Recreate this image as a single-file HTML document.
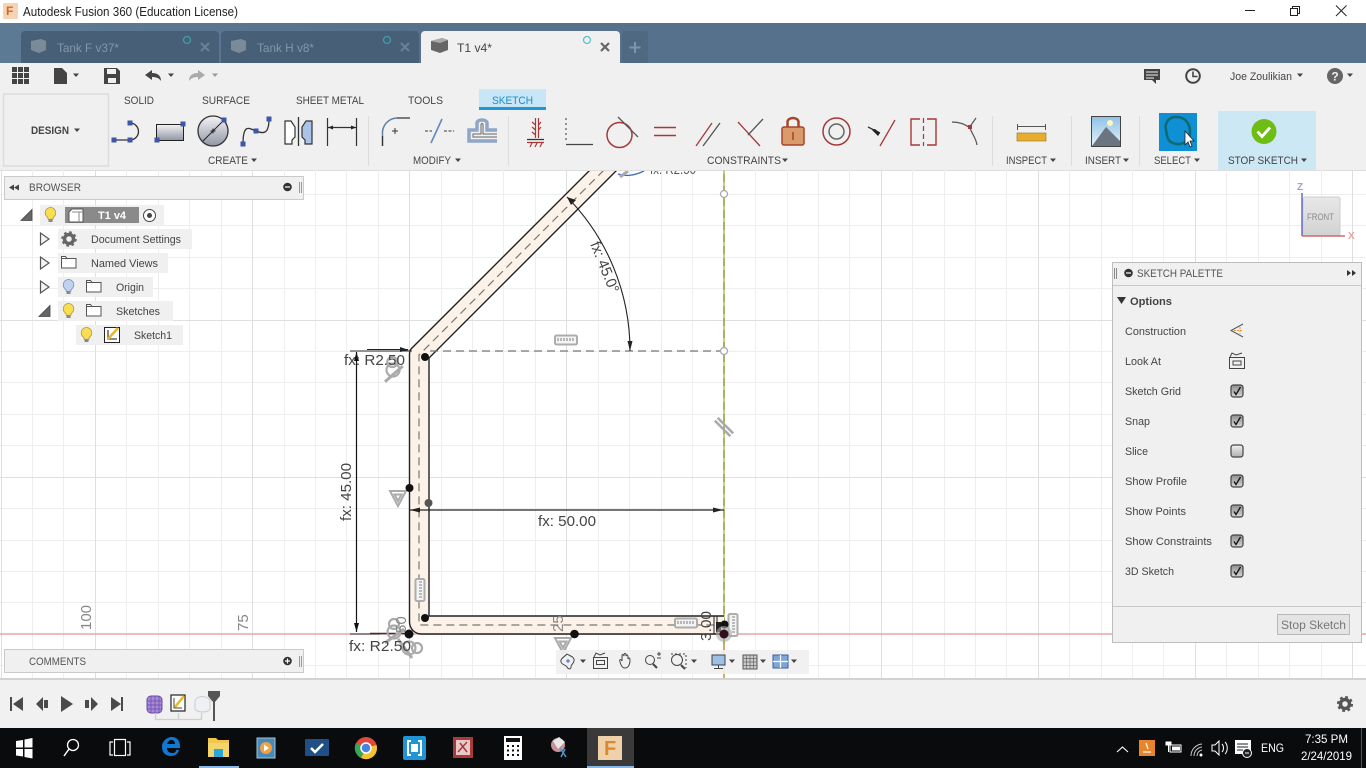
<!DOCTYPE html>
<html lang="en"><head><meta charset="utf-8"><title>Autodesk Fusion 360</title>
<style>html,body{margin:0;padding:0;background:#fff;overflow:hidden}svg{display:block;font-family:"Liberation Sans",sans-serif}</style></head>
<body>
<svg width="1366" height="768" viewBox="0 0 1366 768" xmlns="http://www.w3.org/2000/svg">
<defs>
<clipPath id="cv"><rect x="0" y="171" width="1366" height="507"/></clipPath>
<linearGradient id="g1" x1="0" y1="0" x2="0" y2="1"><stop offset="0" stop-color="#f4f4f6"/><stop offset="1" stop-color="#8f95a3"/></linearGradient>
<linearGradient id="tb" x1="0" y1="0" x2="1" y2="0"><stop offset="0" stop-color="#5d7a95"/><stop offset=".3" stop-color="#56718b"/><stop offset="1" stop-color="#56718b"/></linearGradient>
<linearGradient id="cb" x1="0" y1="0" x2="0" y2="1"><stop offset="0" stop-color="#909090"/><stop offset="1" stop-color="#d4d4d4"/></linearGradient>
<linearGradient id="cb2" x1="0" y1="0" x2="0" y2="1"><stop offset="0" stop-color="#f0f0f0"/><stop offset="1" stop-color="#b0b0b0"/></linearGradient>
<linearGradient id="cube" x1="0" y1="0" x2="0" y2="1"><stop offset="0" stop-color="#e8e8e8"/><stop offset="1" stop-color="#d2d2d2"/></linearGradient>
<linearGradient id="sky" x1="0" y1="0" x2="0" y2="1"><stop offset="0" stop-color="#8fc1e8"/><stop offset="1" stop-color="#e8f2f8"/></linearGradient>
<g id="bulb"><path d="M0-7.500a5.300 5.300 0 0 1 3.400 9.300c-.9.900-1.100 1.400-1.100 2.500h-4.600c0-1.100-.2-1.600-1.100-2.500A5.300 5.300 0 0 1 0-7.500z" fill="#f8de50" stroke="#a89a50" stroke-width=".8"/><path d="M-2 4.500h4v2.500h-4z" fill="#888"/></g>
<g id="bulbb"><path d="M0-7.500a5.300 5.300 0 0 1 3.400 9.300c-.9.900-1.100 1.400-1.100 2.500h-4.600c0-1.100-.2-1.600-1.100-2.500A5.300 5.300 0 0 1 0-7.500z" fill="#c0d2f2" stroke="#7f8fb0" stroke-width=".8"/><path d="M-2 4.500h4v2.500h-4z" fill="#888"/></g>
<path id="folder" d="M.5 1.500h4l1.500 2h9v9.500H.5zM.5 3.500h5.500" fill="#fff" stroke="#555" stroke-width="1"/>
<path id="triopen" d="M0-6V6L8.500 0z" fill="#f4f4f4" stroke="#555" stroke-width="1.200"/>
<path id="triexp" d="M0 5.500H11V-5.500z" fill="#666" stroke="#444" stroke-width=".8"/>
<g id="chk"><rect x="-6" y="-6" width="12" height="12" rx="2.500" fill="url(#cb)" stroke="#444" stroke-width="1.200"/><path d="M-3 .5L-1 3.500L3.500-4" fill="none" stroke="#111" stroke-width="1.300"/></g>
<g id="ruler"><rect x="-11" y="-4.500" width="22" height="9" rx="1.500" fill="#f4f4f4" stroke="#adadad" stroke-width="2"/><path d="M-8-2v3M-5-2v3M-2-2v3M1-2v3M4-2v3M7-2v3" stroke="#999" stroke-width="1.300"/></g>
<path id="cstr" d="M-8-7H8L0 8z M-3.500-3.500H3.500L0 3z" fill="#fff" fill-opacity=".75" stroke="#aaa" stroke-width="2"/>
<g id="tang"><circle cx="0" cy="0" r="6.500" fill="none" stroke="#aaa" stroke-width="2.200"/><circle cx="0" cy="-8" r="5" fill="none" stroke="#aaa" stroke-width="2.200"/><path d="M-9 11L10 -3" stroke="#aaa" stroke-width="3"/></g>
<path id="car" d="M-3-1.500H3L0 2z" fill="#444"/>
<path id="sq" d="M-2.500-2.500h5v5h-5z" fill="#3c57a8"/>
</defs>

<!-- title bar -->
<rect width="1366" height="23" fill="#fff"/>
<rect x="3" y="3" width="15" height="16" rx="1" fill="#f5d3b4"/><text x="6" y="15" font-size="12" font-weight="bold" fill="#d4691f">F</text>
<text x="23" y="16" font-size="13" fill="#222" textLength="215" lengthAdjust="spacingAndGlyphs">Autodesk Fusion 360 (Education License)</text>
<path d="M1245 10.500h10" stroke="#222" stroke-width="1"/>
<path d="M1290.500 8.500h7v7h-7zM1292.500 8.500v-2h7v7h-2" fill="none" stroke="#222"/>
<path d="M1336 5.500l10.500 10.500M1346.500 5.500L1336 16" stroke="#222" stroke-width="1"/>

<!-- tab band -->
<rect y="23" width="1366" height="40" fill="url(#tb)"/>
<path d="M21 35a4 4 0 0 1 4-4H215a4 4 0 0 1 4 4V63H21z" fill="#475f77"/>
<path d="M221 35a4 4 0 0 1 4-4H415a4 4 0 0 1 4 4V63H221z" fill="#475f77"/>
<path d="M421 35a4 4 0 0 1 4-4H616a4 4 0 0 1 4 4V63H421z" fill="#f0f0f0"/>
<rect x="622" y="31" width="26" height="32" rx="2" fill="#4f6982"/>
<path d="M31 41l10-2 5 2v9l-7 3-8-3z" fill="#7b8a98"/>
<path d="M231 41l10-2 5 2v9l-7 3-8-3z" fill="#7b8a98"/>
<path d="M431 41l11-3 6 2v10l-8 3-9-3z" fill="#666"/><path d="M431 41l9 2 8-3-6-2z" fill="#aaa"/>
<text x="57" y="52" font-size="12" fill="#8497a9" textLength="62" lengthAdjust="spacingAndGlyphs">Tank F v37*</text>
<text x="257" y="52" font-size="12" fill="#8497a9" textLength="57" lengthAdjust="spacingAndGlyphs">Tank H v8*</text>
<text x="457" y="52" font-size="12" fill="#444" textLength="35" lengthAdjust="spacingAndGlyphs">T1 v4*</text>
<circle cx="187" cy="40" r="3.500" fill="none" stroke="#3fa0a8" stroke-width="1.300"/>
<circle cx="387" cy="40" r="3.500" fill="none" stroke="#3fa0a8" stroke-width="1.300"/>
<circle cx="587" cy="40" r="3.500" fill="none" stroke="#5cc0c8" stroke-width="1.300"/>
<path d="M201 43l8 8M209 43l-8 8M401 43l8 8M409 43l-8 8" stroke="#6d8092" stroke-width="2.200"/>
<path d="M601 43l8 8M609 43l-8 8" stroke="#666" stroke-width="2.200"/>
<path d="M635 42v11M629.500 47.500h11" stroke="#7f95a9" stroke-width="2"/>

<!-- toolbar -->
<rect y="63" width="1366" height="107" fill="#f0f0f0"/>
<g fill="#444">
<path d="M12 67h5v5h-5zM18 67h5v5h-5zM24 67h5v5h-5zM12 73h5v5h-5zM18 73h5v5h-5zM24 73h5v5h-5zM12 79h5v5h-5zM18 79h5v5h-5zM24 79h5v5h-5z"/>
<path d="M54 68h8l5 5v11H54z"/>
<path d="M104 68h13l3 3v13h-16z"/>
</g>
<rect x="107" y="69" width="9" height="5" fill="#f0f0f0"/><rect x="108" y="78" width="8" height="5" fill="#f0f0f0"/>
<use href="#car" x="76" y="75"/>
<path d="M145 75l7-5v3c5 0 9 2 9 8-2-3-5-4-9-4v3z" fill="#444"/><use href="#car" x="171" y="75"/>
<path d="M205 75l-7-5v3c-5 0-9 2-9 8 2-3 5-4 9-4v3z" fill="#aaa"/><use href="#car" x="215" y="75" opacity=".5"/>
<path d="M1144 69h16v11h-4v4l-4-4h-8z" fill="#444"/><path d="M1146 72h12M1146 75h12M1146 78h8" stroke="#f0f0f0"/>
<circle cx="1193" cy="76" r="6.800" fill="none" stroke="#444" stroke-width="2"/><path d="M1193 71.500V76.500H1197.500" fill="none" stroke="#444" stroke-width="1.600"/>
<text x="1230" y="80" font-size="11" fill="#444" textLength="62" lengthAdjust="spacingAndGlyphs">Joe Zoulikian</text><use href="#car" x="1300" y="75"/>
<circle cx="1335" cy="76" r="8" fill="#666"/><text x="1335" y="80.500" font-size="12" font-weight="bold" fill="#f0f0f0" text-anchor="middle">?</text><use href="#car" x="1350" y="75"/>

<rect x="3.500" y="94" width="105" height="72" fill="#f0f0f0" stroke="#dcdcdc" stroke-width="1.500"/>
<text x="31" y="134" font-size="11" font-weight="bold" fill="#444" textLength="38" lengthAdjust="spacingAndGlyphs">DESIGN</text><use href="#car" x="77" y="130"/>
<g font-size="11" fill="#444">
<text x="124" y="104" textLength="30" lengthAdjust="spacingAndGlyphs">SOLID</text>
<text x="202" y="104" textLength="48" lengthAdjust="spacingAndGlyphs">SURFACE</text>
<text x="296" y="104" textLength="68" lengthAdjust="spacingAndGlyphs">SHEET METAL</text>
<text x="408" y="104" textLength="35" lengthAdjust="spacingAndGlyphs">TOOLS</text>
</g>
<rect x="479" y="89" width="67" height="20" fill="#c9e6f6"/><rect x="479" y="107" width="67" height="3" fill="#1f97d4"/>
<text x="492" y="104" font-size="11" fill="#1c8dcb" textLength="41" lengthAdjust="spacingAndGlyphs">SKETCH</text>
<g font-size="11" fill="#444">
<text x="208" y="164" textLength="40" lengthAdjust="spacingAndGlyphs">CREATE</text><use href="#car" x="254" y="160"/>
<text x="413" y="164" textLength="38" lengthAdjust="spacingAndGlyphs">MODIFY</text><use href="#car" x="458" y="160"/>
<text x="707" y="164" textLength="74" lengthAdjust="spacingAndGlyphs">CONSTRAINTS</text><use href="#car" x="785" y="160"/>
<text x="1006" y="164" textLength="41" lengthAdjust="spacingAndGlyphs">INSPECT</text><use href="#car" x="1053" y="160"/>
<text x="1085" y="164" textLength="36" lengthAdjust="spacingAndGlyphs">INSERT</text><use href="#car" x="1126" y="160"/>
<text x="1154" y="164" textLength="37" lengthAdjust="spacingAndGlyphs">SELECT</text><use href="#car" x="1197" y="160"/>
</g>
<path d="M368.500 116V166M508.500 116V166M992.500 116V166M1071.500 116V166M1139.500 116V166" stroke="#ddd"/>

<!-- create icons -->
<path d="M114 140H130A8.500 8.500 0 0 0 130 123" fill="none" stroke="#333" stroke-width="1.300"/>
<use href="#sq" x="114" y="140"/><use href="#sq" x="130" y="140"/><use href="#sq" x="130" y="123"/>
<rect x="156.500" y="124.500" width="27" height="16" fill="url(#g1)" stroke="#222"/>
<use href="#sq" x="183" y="124"/><use href="#sq" x="157" y="140"/>
<circle cx="213" cy="131" r="15" fill="url(#g1)" stroke="#333" stroke-width="1.300"/>
<path d="M203 141L224 120M210.500 131h5M213 128.500v5" stroke="#222"/><use href="#sq" x="224" y="120"/>
<path d="M243 144C243 122 250 129 256 131S269 136 269 119" fill="none" stroke="#333" stroke-width="1.300"/>
<use href="#sq" x="243" y="144"/><use href="#sq" x="256" y="131"/><use href="#sq" x="269" y="119"/>
<path d="M285 121h6l4 6v10l-3 3v4h-7z" fill="#fff" stroke="#333" stroke-width="1.200"/>
<path d="M298.500 117V146" stroke="#333" stroke-width="1.300"/>
<path d="M312 121h-6l-4 6v10l3 3v4h7z" fill="#a9c4e6" stroke="#333" stroke-width="1.200"/>
<path d="M327.500 118V146M356.500 118V146M328 127.500H356" stroke="#333" stroke-width="1.200"/>
<path d="M328 127.500l5-2v4zM356 127.500l-5-2v4z" fill="#222"/>
<!-- modify -->
<path d="M382.500 146V134A15 15 0 0 1 397 118" fill="none" stroke="#5f7fa8" stroke-width="1.500"/><path d="M382.500 146V136M397 118H410" stroke="#333" stroke-width="1.200"/>
<path d="M392 131h6M395 128v6" stroke="#333"/>
<path d="M425 131h7M444 131h10" stroke="#777" stroke-width="1.400" stroke-dasharray="3 1.500"/><path d="M431 143L442 119" stroke="#5f87c4" stroke-width="1.600"/>
<path d="M497 141H469V130H477V123C477 119 487 119 487 123V130H497" fill="none" stroke="#8fa6c8" stroke-width="3.500"/>
<path d="M497 137H473V134H481V125C481 123 483 123 483 125V134H497" fill="none" stroke="#666" stroke-width="1"/>
<!-- constraints -->
<g fill="none" stroke="#a83838" stroke-width="1.200">
<path d="M535.500 118V138M538.500 118V138M532 122l3.500 3M532 127l3.500 3M532 132l3.500 3M541 122l-2.500 3M541 127l-2.500 3"/>
<path d="M527 139.500H544" stroke="#333"/><path d="M527 142.500H544M530 147l2-4M535 147l2-4M540 147l2-4"/>
<path d="M566 118v25" stroke="#555" stroke-dasharray="2 3"/><path d="M566 144.500H593" stroke="#444"/>
<circle cx="619.500" cy="135" r="12.500" stroke-width="1.500"/>
<path d="M654 127.500H676M654 135.500H676" stroke-width="1.500"/>
<path d="M696 146L712 123" stroke-width="1.300"/><path d="M703 146L720 123" stroke="#555" stroke-width="1.300"/>
<path d="M738 122L760 146" stroke-width="1.300"/>
<path d="M748 135L763 119" stroke="#555" stroke-width="1.300"/>
<circle cx="836.500" cy="131.500" r="13.500" stroke-width="1.500"/><circle cx="836.500" cy="131.500" r="7.500" stroke="#666" stroke-width="1.500"/>
<path d="M880 146L895 120" stroke-width="1.300"/><path d="M868 127l12 6" stroke="#333" stroke-width="1.300"/>
<path d="M920 119h-9v26h9M927 119h9v26h-9" stroke-width="1.400"/><path d="M923.500 118v28" stroke-dasharray="5 3"/>
<path d="M952 122c6 0 13 2 18 6" stroke="#555"/><path d="M970 128c2 6 6 10 7 17" stroke="#555"/><path d="M976 118l-7 10" stroke="#555"/>
</g>
<path d="M618 117L638 137" stroke="#555" stroke-width="1.300"/>
<rect x="968" y="125" width="4" height="4" fill="#a83838"/>
<path d="M878 136l-6-6 3-1 5 4z" fill="#222"/>
<path d="M787.500 127V122a5.500 4 0 0 1 11 0V127" fill="none" stroke="#a8452a" stroke-width="2.500"/>
<rect x="782" y="127" width="22" height="18" rx="2" fill="#d99a6c" stroke="#a8452a" stroke-width="1.500"/><path d="M793 132v8" stroke="#a8452a" stroke-width="1.500"/>
<!-- inspect/insert/select/stop -->
<path d="M1017 126.500H1046M1017.500 124v6M1045.500 124v6" stroke="#555"/>
<rect x="1017" y="133" width="29" height="8" fill="#e6ad30" stroke="#a87c20" stroke-width=".7"/>
<rect x="1091.500" y="116.500" width="29" height="30" fill="url(#sky)" stroke="#444"/><circle cx="1110" cy="123" r="3" fill="#fff6c0"/>
<path d="M1092 146L1106 127L1120 141V146z" fill="#6b7580"/>
<rect x="1159" y="113" width="38" height="38" fill="#0f8fd4"/>
<path d="M1166 130C1164 120 1172 116 1178 117 1186 118 1190 124 1190 132 1190 143 1180 146 1173 143 1167 141 1167 135 1166 130z" fill="none" stroke="#0d6a70" stroke-width="2.500"/>
<path d="M1185 131v14l3-3 2 5 2-1-2-5h4z" fill="#fff" stroke="#222" stroke-width=".8"/>
<rect x="1218" y="111" width="98" height="59" fill="#cde8f5"/>
<circle cx="1264" cy="131.500" r="12.500" fill="#6ebd14"/><path d="M1257.500 131.500l4.500 5 8-9" fill="none" stroke="#fff" stroke-width="2.800"/>
<text x="1228" y="164" font-size="11" fill="#444" textLength="70" lengthAdjust="spacingAndGlyphs">STOP SKETCH</text><use href="#car" x="1304" y="160"/>

<!-- canvas -->
<rect y="170" width="1366" height="508" fill="#fff"/>
<path d="M0 170.500H1366" stroke="#ddd"/>
<g stroke="#eeeeee" stroke-width="1">
<path d="M32.500 170V678M63.500 170V678M126.500 170V678M158.500 170V678M189.500 170V678M221.500 170V678M284.500 170V678M315.500 170V678M346.500 170V678M378.500 170V678M441.500 170V678M472.500 170V678M503.500 170V678M535.500 170V678M598.500 170V678M629.500 170V678M661.500 170V678M692.500 170V678M755.500 170V678M787.500 170V678M818.500 170V678M849.500 170V678M912.500 170V678M944.500 170V678M975.500 170V678M1006.500 170V678M1069.500 170V678M1101.500 170V678M1132.500 170V678M1163.500 170V678M1226.500 170V678M1258.500 170V678M1289.500 170V678M1321.500 170V678"/>
<path d="M0 194.500H1366M0 225.500H1366M0 257.500H1366M0 288.500H1366M0 351.500H1366M0 382.500H1366M0 414.500H1366M0 445.500H1366M0 508.500H1366M0 540.500H1366M0 571.500H1366M0 602.500H1366M0 665.500H1366"/>
</g>
<g stroke="#dfdfdf" stroke-width="1">
<path d="M1.500 170V678M95.500 170V678M252.500 170V678M409.500 170V678M566.500 170V678M881.500 170V678M1038.500 170V678M1195.500 170V678M1352.500 170V678"/>
<path d="M0 320.500H1366M0 477.500H1366"/>
</g>
<path d="M0 634H1366" stroke="#e8a6a6" stroke-width="1.500"/>
<!-- axis -->
<path d="M724 170V678" stroke="#a8a850" stroke-width="1.800"/><path d="M724 170V634" stroke="#c8e09a" stroke-width="1.200" stroke-dasharray="4 8"/>
<path d="M724 634V678" stroke="#d8a860" stroke-width="1.500" stroke-dasharray="5 5"/>

<!-- profile -->
<g clip-path="url(#cv)">
<path d="M590 170L411 349Q409 351 409 354V622A12 12 0 0 0 421 634H724V616H429V358L617 170z" fill="#fcf2e8"/>
<g fill="none" stroke="#222" stroke-width="1.400">
<path d="M590 170L411 349Q409.500 351 409.500 354V622A12 12 0 0 0 421 634H724"/>
<path d="M617 170L429 358V616H724"/>
</g>
<g fill="none" stroke="#777" stroke-width="1.200" stroke-dasharray="8 5">
<path d="M604 170L419 355V625H724"/>
<path d="M430 351H724"/>
</g>
<path d="M350 351H412" stroke="#333" stroke-width="1"/>
<path d="M367 349.500H408" stroke="#222" stroke-width="1"/><path d="M409 350l-9-3v5z" fill="#222"/>
<circle cx="724" cy="194" r="3.500" fill="#fff" stroke="#aaa" stroke-width="1.300"/>
<circle cx="724" cy="351" r="3.500" fill="#fff" stroke="#aaa" stroke-width="1.300"/>
<!-- dims -->
<path d="M356.500 352V632" stroke="#111" stroke-width="1.200"/><path d="M356.500 352l-2.500 9h5zM356.500 632l-2.500-9h5z" fill="#111"/>
<path d="M370 633.500H409" stroke="#333" stroke-width="1.500"/><path d="M350 634H380" stroke="#333" stroke-width="1"/>
<path d="M409 510H724" stroke="#222" stroke-width="1.200"/><path d="M410 510l10-2.500v5zM723 510l-10-2.500v5z" fill="#222"/>
<path d="M567 197A219 219 0 0 1 630 351" fill="none" stroke="#222" stroke-width="1.100"/><path d="M567 197l9 3-5 5zM630 351l-2.500-10h5z" fill="#222"/>
<path d="M714 616.500V634" stroke="#222"/><path d="M716 622h5v10h-5z" fill="#222"/>
<path d="M717 633V616" stroke="#222" stroke-width="1"/>
<!-- cropped label top -->
<path d="M618 174c8 3 18 1 26-3" fill="none" stroke="#3c66c8" stroke-width="1.300"/>
<path d="M620 177l8-6" stroke="#aaa" stroke-width="3"/>
<text x="650" y="174" font-size="14" fill="#555" textLength="46" lengthAdjust="spacingAndGlyphs">fx: R2.50</text>
<!-- constraint glyphs -->
<use href="#tang" transform="translate(393 370) rotate(-5)"/>
<use href="#ruler" x="566" y="340"/>
<use href="#ruler" transform="translate(420 590) rotate(90)"/>
<use href="#ruler" x="686" y="623"/>
<use href="#ruler" transform="translate(733 625) rotate(90)"/>
<g transform="translate(724 427) rotate(45)" stroke="#aaa" stroke-width="2.500"><path d="M-11-2H11M-11 2H11"/></g>
<use href="#cstr" x="398" y="498"/>
<use href="#cstr" x="563" y="645"/>
<use href="#tang" x="394" y="632"/>
<use href="#tang" transform="translate(409 648) rotate(90)"/>
<!-- points -->
<g fill="#111">
<circle cx="425" cy="357" r="4"/><circle cx="409.500" cy="488" r="4"/><circle cx="425" cy="618" r="4"/><circle cx="409" cy="634" r="4.500"/><circle cx="574.500" cy="634" r="4.300"/>
<circle cx="724.500" cy="624.500" r="4"/>
</g>
<circle cx="428.500" cy="503" r="4" fill="#555"/>
<circle cx="724" cy="634" r="8" fill="#aaa" opacity=".6"/><circle cx="724" cy="634" r="4.500" fill="#30101e"/>
<!-- dim text -->
<g fill="#444" font-size="15">
<text x="344" y="365" textLength="61" lengthAdjust="spacingAndGlyphs">fx: R2.50</text>
<text x="349" y="651" textLength="62" lengthAdjust="spacingAndGlyphs">fx: R2.50</text>
<text x="538" y="526" textLength="58" lengthAdjust="spacingAndGlyphs">fx: 50.00</text>
<text transform="translate(351 521) rotate(-90)" textLength="58" lengthAdjust="spacingAndGlyphs">fx: 45.00</text>
<text transform="translate(590 244) rotate(68)" textLength="54" lengthAdjust="spacingAndGlyphs">fx: 45.0°</text>
<text transform="translate(711 641) rotate(-90)" textLength="30" lengthAdjust="spacingAndGlyphs">3.00</text>
</g>
<g fill="#888" font-size="15">
<text transform="translate(91 630) rotate(-90)">100</text>
<text transform="translate(248 631) rotate(-90)">75</text>
<text transform="translate(406 633) rotate(-90)">50</text>
<text transform="translate(563 632) rotate(-90)">25</text>
</g>
</g>

<!-- browser -->
<rect x="4.500" y="176.500" width="299" height="23" fill="#f0f0f0" stroke="#cacaca"/>
<path d="M9 187.500l5-3v6zM14 187.500l5-3v6z" fill="#444"/>
<text x="29" y="191" font-size="11" fill="#555" textLength="52" lengthAdjust="spacingAndGlyphs">BROWSER</text>
<circle cx="287.500" cy="187" r="4.300" fill="#333"/><path d="M285 187h5" stroke="#fff" stroke-width="1.200"/>
<path d="M299.500 182v11M301.500 182v11" stroke="#999"/>
<rect x="40" y="205" width="124" height="20" fill="#f0f0f0"/>
<rect x="58" y="229" width="134" height="20" fill="#f0f0f0"/>
<rect x="58" y="253" width="110" height="20" fill="#f0f0f0"/>
<rect x="58" y="277" width="95" height="20" fill="#f0f0f0"/>
<rect x="58" y="301" width="115" height="20" fill="#f0f0f0"/>
<rect x="76" y="325" width="107" height="20" fill="#f0f0f0"/>
<use href="#triexp" x="21" y="215"/><use href="#triexp" x="39" y="311"/>
<use href="#triopen" x="40.500" y="239"/><use href="#triopen" x="40.500" y="263"/><use href="#triopen" x="40.500" y="287"/>
<use href="#bulb" x="50.500" y="215"/><use href="#bulb" x="68.500" y="311"/><use href="#bulb" x="86.500" y="335"/><use href="#bulbb" x="68.500" y="287"/>
<rect x="65" y="207" width="74" height="16" fill="#8a8a8a"/>
<path d="M69 212l3-3h11v13H69z" fill="#fff" stroke="#555"/><path d="M72 212h11" stroke="#888" fill="none"/><path d="M79 212v10" stroke="#888"/>
<text x="98" y="219" font-size="11" font-weight="bold" fill="#fff" textLength="28" lengthAdjust="spacingAndGlyphs">T1 v4</text>
<circle cx="149.500" cy="215.500" r="6" fill="#fff" stroke="#444"/><circle cx="149.500" cy="215.500" r="2.500" fill="#444"/>
<circle cx="69" cy="239" r="4.500" fill="none" stroke="#666" stroke-width="3.500"/><circle cx="69" cy="239" r="6.500" fill="none" stroke="#666" stroke-width="2.500" stroke-dasharray="2.500 2.600"/>
<use href="#folder" x="61" y="255"/><use href="#folder" x="86" y="279"/><use href="#folder" x="86" y="303"/>
<rect x="104.500" y="327.500" width="15" height="15" fill="#fff" stroke="#222"/><path d="M108 330v9h9" fill="none" stroke="#445" stroke-width="1.300"/><path d="M108 339l10-11" stroke="#e8b820" stroke-width="2.500"/>
<g font-size="11" fill="#444">
<text x="91" y="243" textLength="90" lengthAdjust="spacingAndGlyphs">Document Settings</text>
<text x="91" y="267" textLength="67" lengthAdjust="spacingAndGlyphs">Named Views</text>
<text x="116" y="291" textLength="28" lengthAdjust="spacingAndGlyphs">Origin</text>
<text x="116" y="315" textLength="44" lengthAdjust="spacingAndGlyphs">Sketches</text>
<text x="134" y="339" textLength="38" lengthAdjust="spacingAndGlyphs">Sketch1</text>
</g>
<!-- comments -->
<rect x="4.500" y="649.500" width="299" height="23" fill="#f0f0f0" stroke="#cacaca"/>
<text x="29" y="665" font-size="11" fill="#555" textLength="57" lengthAdjust="spacingAndGlyphs">COMMENTS</text>
<circle cx="287.500" cy="661" r="4.300" fill="#333"/><path d="M285 661h5M287.500 658.500v5" stroke="#fff" stroke-width="1.200"/>
<path d="M299.500 656v11M301.500 656v11" stroke="#999"/>

<!-- nav bar -->
<rect x="556" y="650" width="253" height="24" fill="#f0f0f0" opacity=".9"/>
<g fill="none" stroke="#444" stroke-width="1">
<path d="M567 654c3 2 8 3 7 7s-3 3-3 6-3 2-4 0-5-2-6-5 3-5 6-8z"/><path d="M566 661h4M568 659v4" stroke="#3c66c8"/>
<path d="M593.500 657.500h14v11h-14zM596.500 660.500h8v4h-8zM594 657l2-4 4 2 5-2" />
<path d="M620 662c-1-3 1-3 2-1v-5c0-2 1-2 2 0v-1c0-2 2-2 2 0v1c1-2 2-1 2 1v2c1-2 2-1 2 1 0 5-2 8-5 8s-4-3-5-6z"/>
<circle cx="650" cy="660" r="4.500"/><path d="M653 664l4 4" stroke-width="2"/><path d="M657 654h4M659 652v4M657 658h4"/>
<circle cx="677" cy="660" r="5.500"/><path d="M681 665l4 4" stroke-width="2"/><path d="M671 654h15v14" stroke-dasharray="2 2"/>
</g>
<rect x="712" y="655" width="13" height="10" fill="#9ec0e4" stroke="#444"/><path d="M718.500 665v3M714 668.500h9" stroke="#444"/>
<rect x="743" y="655" width="14" height="14" fill="#ccc" stroke="#555"/><path d="M743 658.500h14M743 662h14M743 665.500h14M746.500 655v14M750 655v14M753.500 655v14" stroke="#666" stroke-width=".7"/>
<rect x="773" y="655" width="15" height="13" fill="#7fa6d4" stroke="#3c5f95"/><path d="M780.500 655v13M773 661.500h15" stroke="#fff" stroke-width="1.200"/>
<use href="#car" x="583" y="661"/><use href="#car" x="694" y="661"/><use href="#car" x="732" y="661"/><use href="#car" x="763" y="661"/><use href="#car" x="794" y="661"/>

<!-- view cube -->
<rect x="1303" y="197" width="37" height="39" rx="2" fill="url(#cube)" stroke="#ccc"/>
<text x="1320.500" y="220" font-size="9" fill="#8a8a8a" text-anchor="middle" textLength="27" lengthAdjust="spacingAndGlyphs">FRONT</text>
<path d="M1302 193V236" stroke="#6a6ac0" stroke-width="1.500"/><path d="M1302 236H1345" stroke="#d06a6a" stroke-width="1.500"/>
<text x="1297" y="190" font-size="10" font-weight="bold" fill="#a0a0e0">Z</text>
<text x="1348" y="239" font-size="10" font-weight="bold" fill="#eaa0a0">X</text>

<!-- palette -->
<rect x="1112.500" y="262.500" width="249" height="380" fill="#f0f0f0" stroke="#bdbdbd"/>
<path d="M1113 285.500H1361M1113 606.500H1361" stroke="#c8c8c8"/>
<path d="M1114.500 268v11M1116.500 268v11" stroke="#888"/>
<circle cx="1128.500" cy="273" r="4.300" fill="#333"/><path d="M1126 273h5" stroke="#fff" stroke-width="1.200"/>
<text x="1137" y="277" font-size="11" fill="#555" textLength="86" lengthAdjust="spacingAndGlyphs">SKETCH PALETTE</text>
<path d="M1347 270v6l4-3zM1352 270v6l4-3z" fill="#333"/>
<path d="M1117 297h9l-4.500 7z" fill="#333"/>
<text x="1130" y="305" font-size="11" font-weight="bold" fill="#444" textLength="42" lengthAdjust="spacingAndGlyphs">Options</text>
<g font-size="11" fill="#444">
<text x="1125" y="335" textLength="61" lengthAdjust="spacingAndGlyphs">Construction</text>
<text x="1125" y="365" textLength="36" lengthAdjust="spacingAndGlyphs">Look At</text>
<text x="1125" y="395" textLength="56" lengthAdjust="spacingAndGlyphs">Sketch Grid</text>
<text x="1125" y="425" textLength="25" lengthAdjust="spacingAndGlyphs">Snap</text>
<text x="1125" y="455" textLength="23" lengthAdjust="spacingAndGlyphs">Slice</text>
<text x="1125" y="485" textLength="62" lengthAdjust="spacingAndGlyphs">Show Profile</text>
<text x="1125" y="515" textLength="61" lengthAdjust="spacingAndGlyphs">Show Points</text>
<text x="1125" y="545" textLength="87" lengthAdjust="spacingAndGlyphs">Show Constraints</text>
<text x="1125" y="575" textLength="49" lengthAdjust="spacingAndGlyphs">3D Sketch</text>
</g>
<path d="M1243 324l-12 6.500 12 6.500" fill="none" stroke="#555"/><path d="M1234 330.500h9M1240 327v7" stroke="#e8952a" stroke-dasharray="2 1"/>
<path d="M1229.500 357.500h15v11h-15zM1233 361h8v4h-8zM1230 357l2-4 4 2 6-2" fill="none" stroke="#444"/>
<use href="#chk" x="1237" y="391"/><use href="#chk" x="1237" y="421"/>
<rect x="1231" y="445" width="12" height="12" rx="2.500" fill="url(#cb2)" stroke="#444" stroke-width="1.200"/>
<use href="#chk" x="1237" y="481"/><use href="#chk" x="1237" y="511"/><use href="#chk" x="1237" y="541"/><use href="#chk" x="1237" y="571"/>
<rect x="1277.500" y="614.500" width="72" height="20" fill="#e4e4e4" stroke="#b8b8b8"/>
<text x="1281" y="629" font-size="12" fill="#777" textLength="65" lengthAdjust="spacingAndGlyphs">Stop Sketch</text>

<!-- timeline -->
<rect y="678" width="1366" height="50" fill="#f1f1f1"/>
<rect y="678" width="1366" height="2" fill="#d2d2d2"/>
<g fill="#4a4a4a">
<path d="M10 697h2v14h-2zM23 697v14l-10-7z"/>
<path d="M36 704l7-7v14zM44 700h4v8h-4z"/>
<path d="M61 696l12 8-12 8z"/>
<path d="M98 704l-7-7v14zM85 700h4v8h-4z"/>
<path d="M111 697l10 7-10 7zM121 697h2v14h-2z"/>
</g>
<rect x="147" y="696" width="15" height="17" rx="4" fill="#a58ad8" stroke="#6a4aa8"/><path d="M147 701h15M147 705h15M147 709h15M151 696v17M155 696v17M159 696v17" stroke="#6a4aa8" stroke-width=".7"/>
<rect x="171" y="695" width="14" height="16" fill="#fff" stroke="#222" stroke-width="1.200"/><path d="M174 698v10h8" fill="none" stroke="#444"/><path d="M175 707l9-11" stroke="#e8b820" stroke-width="2.500"/>
<path d="M195 701c2-6 13-6 15 0v8c-2 4-13 4-15 0z" fill="#eef0f4" stroke="#c8ccd4"/>
<path d="M155.500 713v6.500h46V713M178.500 713v6" fill="none" stroke="#d0d0d0" stroke-width="1.300"/>
<path d="M208 691h12v5l-5 6h-2l-5-6z" fill="#555"/><rect x="213" y="700" width="2" height="21" fill="#555"/>
<circle cx="1345" cy="704" r="4.500" fill="none" stroke="#555" stroke-width="3.500"/><circle cx="1345" cy="704" r="6.800" fill="none" stroke="#555" stroke-width="2.500" stroke-dasharray="2.700 2.640"/>

<!-- taskbar -->
<rect y="728" width="1366" height="40" fill="#090b0d"/>
<path d="M16 741l7-1v7.500h-7zM24.500 739.500l8-1.500v9.500h-8zM16 749h7v7.500l-7-1zM24.500 749h8v9.500l-8-1.500z" fill="#fff"/>
<circle cx="73" cy="745" r="5.500" fill="none" stroke="#fff" stroke-width="1.300"/><path d="M69 749l-5 7" stroke="#fff" stroke-width="1.500"/>
<path d="M113 742h-3v13h3M127 742h3v13h-3" fill="none" stroke="#fff" stroke-width="1.200"/><rect x="114.500" y="739.500" width="11" height="16" fill="none" stroke="#fff" stroke-width="1.200"/>
<path d="M179 750c-1 4-4 6-8 6-5 0-9-3-9-9 0-6 5-10 10-10 5 0 8 4 8 9v2h-13c0 3 2 5 5 5s4-1 4-3zM167 744h8c0-2-1-4-4-4-2 0-3 2-4 4z" fill="#0e78d2"/>
<path d="M208 738h8l2 2h11v14h-21z" fill="#f2c84c"/><rect x="208" y="743" width="21" height="14" fill="#f5d56a"/><rect x="214" y="749" width="9" height="8" fill="#2ba8d8"/>
<rect x="257" y="738" width="18" height="20" fill="#4a8ab8" stroke="#9fc5de"/><circle cx="266" cy="748" r="6" fill="#f2a040"/><path d="M264 744.500l5 3.500-5 3.500z" fill="#fff"/>
<rect x="305" y="739" width="24" height="17" rx="1" fill="#1f4f86"/><path d="M311 748l4 4 8-8" fill="none" stroke="#fff" stroke-width="2.500"/>
<circle cx="366" cy="748" r="11" fill="#e04a3a"/><path d="M366 748L376.500 745A11 11 0 0 1 361 758z" fill="#f4c430"/><path d="M366 748L361 758A11 11 0 0 1 356 743z" fill="#3aa655"/><circle cx="366" cy="748" r="5" fill="#4a82e0" stroke="#fff" stroke-width="1.500"/>
<rect x="403" y="736" width="23" height="24" rx="2" fill="#1f95d8"/><path d="M411 741h-3v14h3M418 741h3v14h-3" fill="none" stroke="#fff" stroke-width="2"/><rect x="411" y="744" width="7" height="8" fill="#fff"/>
<rect x="453" y="737" width="20" height="21" fill="#a83a3a"/><rect x="456" y="740" width="14" height="15" fill="#e8c8c8"/><path d="M458 752l9-10M460 743l7 9" stroke="#a83a3a" stroke-width="1.500"/>
<rect x="504" y="736" width="18" height="24" fill="#fff"/><rect x="506" y="738" width="14" height="4" fill="#111"/>
<path d="M507 745h2v2h-2zM512 745h2v2h-2zM517 745h2v2h-2zM507 749.500h2v2h-2zM512 749.500h2v2h-2zM517 749.500h2v2h-2zM507 754h2v2h-2zM512 754h2v2h-2zM517 754h2v2h-2z" fill="#111"/>
<circle cx="558" cy="745" r="7" fill="#c89098"/><path d="M553 741l6-4 6 5-7 7z" fill="#e8e8e8"/><path d="M560 748l6 9M565 749l-4 8" stroke="#4a9ac8" stroke-width="1.500"/>
<rect x="587" y="728" width="47" height="40" fill="#3a3a3a"/>
<rect x="598" y="736" width="24" height="24" fill="#f0d0a8"/><text x="604" y="755" font-size="20" font-weight="bold" fill="#d88a30">F</text>
<rect x="587" y="766" width="47" height="2" fill="#88b8e8"/><rect x="199" y="766" width="40" height="2" fill="#88b8e8"/>
<path d="M1117 752l5.500-5 5.500 5" fill="none" stroke="#fff" stroke-width="1.100"/>
<rect x="1139" y="740" width="16" height="16" fill="#e8842a"/><path d="M1143 752h8M1146 743l2 6" stroke="#fff" stroke-width="1.200"/>
<rect x="1170" y="745" width="11" height="7" fill="none" stroke="#fff"/><rect x="1172" y="746.500" width="8" height="4" fill="#fff"/><path d="M1166 742h5v3h-5zM1168.500 745v7" fill="#fff" stroke="#fff"/>
<path d="M1191 756a12 12 0 0 1 11-12M1194 756a9 9 0 0 1 8-9M1197 756a6 6 0 0 1 5-6" fill="none" stroke="#ccc"/><circle cx="1201" cy="755" r="1.500" fill="#fff"/>
<path d="M1212 745h3l4-4v14l-4-4h-3z" fill="none" stroke="#fff"/><path d="M1222 744c2 2 2 6 0 8M1225 742c3 3 3 9 0 12" fill="none" stroke="#fff"/>
<rect x="1235" y="740" width="16" height="14" fill="#fff"/><path d="M1237 744h11M1237 747h11M1237 750h6" stroke="#222"/><circle cx="1247" cy="753" r="4.500" fill="#222" stroke="#fff"/><path d="M1245 753h4" stroke="#fff"/>
<text x="1261" y="752" font-size="12" fill="#fff" textLength="23" lengthAdjust="spacingAndGlyphs">ENG</text>
<text x="1305" y="743" font-size="12" fill="#fff" textLength="43" lengthAdjust="spacingAndGlyphs">7:35 PM</text>
<text x="1301" y="760" font-size="12" fill="#fff" textLength="51" lengthAdjust="spacingAndGlyphs">2/24/2019</text>
<path d="M1361.500 728v40" stroke="#555"/>
</svg>
</body></html>
